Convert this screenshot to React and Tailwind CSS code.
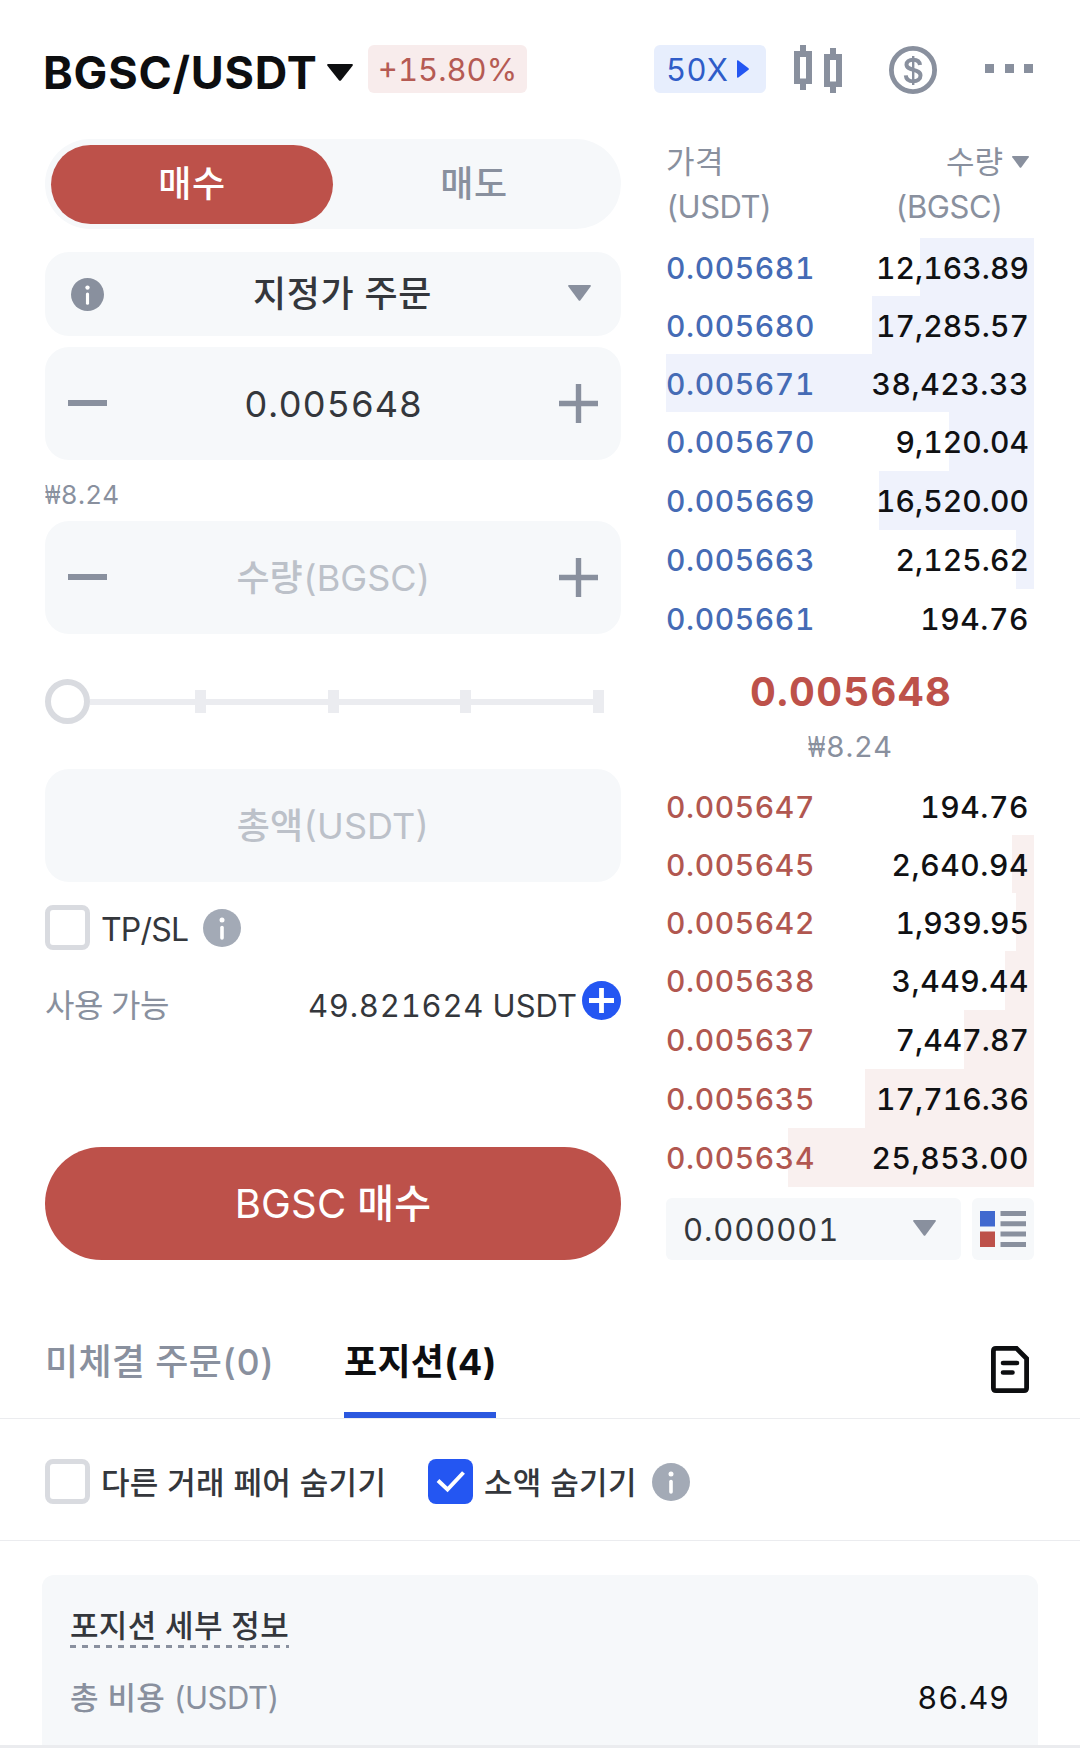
import React from 'react';
import clsx from 'clsx';

const asks = [
  { price: '0.005681', amount: '12,163.89', depth: 114 },
  { price: '0.005680', amount: '17,285.57', depth: 162 },
  { price: '0.005671', amount: '38,423.33', depth: 368 },
  { price: '0.005670', amount: '9,120.04', depth: 85 },
  { price: '0.005669', amount: '16,520.00', depth: 155 },
  { price: '0.005663', amount: '2,125.62', depth: 18 },
  { price: '0.005661', amount: '194.76', depth: 0 },
];

const bids = [
  { price: '0.005647', amount: '194.76', depth: 0 },
  { price: '0.005645', amount: '2,640.94', depth: 22 },
  { price: '0.005642', amount: '1,939.95', depth: 18 },
  { price: '0.005638', amount: '3,449.44', depth: 29 },
  { price: '0.005637', amount: '7,447.87', depth: 70 },
  { price: '0.005635', amount: '17,716.36', depth: 169 },
  { price: '0.005634', amount: '25,853.00', depth: 246 },
];

const TriangleDown = ({ className }) => (
  <svg viewBox="0 0 24 16" preserveAspectRatio="none" className={className} fill="currentColor">
    <path d="M1 0h22q1.4 .3.6 1.6L13 15.2q-1 1.2-2 0L.4 1.6Q-.4.3 1 0Z" />
  </svg>
);

const InfoIcon = ({ className }) => (
  <svg viewBox="0 0 38 38" className={className}>
    <circle cx="19" cy="19" r="19" fill="currentColor" />
    <circle cx="19" cy="11" r="2.5" fill="#fff" />
    <path d="M19 18.5v10.5" stroke="#fff" strokeWidth="3.6" strokeLinecap="round" />
  </svg>
);

const Checkbox = ({ checked }) =>
  checked ? (
    <span className="flex size-[45px] shrink-0 items-center justify-center rounded-lg bg-[#2456f2]">
      <svg viewBox="0 0 45 45" className="size-[45px]" fill="none">
        <path d="M10 21.5l9.5 9L35.5 13.5" stroke="#fff" strokeWidth="4" />
      </svg>
    </span>
  ) : (
    <span className="size-[45px] shrink-0 rounded-lg border-[5px] border-[#d9dbe0]" />
  );

const Won = () => <span className="-mr-[0.36em] inline-block origin-left scale-x-[0.62]">₩</span>;

const Minus = () => <span className="mb-px h-[6px] w-[39px] bg-[#89909e]" />;

const Plus = () => (
  <svg viewBox="0 0 39 39" className="size-[39px]" stroke="#89909e">
    <path d="M0 19.5h39" strokeWidth="5.4" />
    <path d="M19.5 0v39" strokeWidth="5.4" />
  </svg>
);

const Stepper = ({ children }) => (
  <div className="flex h-[113px] items-center justify-between rounded-[24px] bg-[#f6f8fa] px-[23px]">
    <Minus />
    {children}
    <Plus />
  </div>
);

const BookRow = ({ row, index, side }) => (
  <div
    className={clsx(
      'relative flex w-full items-center justify-between text-[30px] leading-none font-medium tracking-[0.6px]',
      index < 3 ? 'h-[58px] pt-[2px]' : 'h-[59px]'
    )}
  >
    <div
      className={clsx('absolute inset-y-0 right-0', side === 'ask' ? 'bg-[#eff2fc]' : 'bg-[#f9f0ef]')}
      style={{ width: row.depth }}
    />
    <span className={clsx('relative', side === 'ask' ? 'text-[#456bb5]' : 'text-[#b15750]')}>{row.price}</span>
    {/* 1 and 7 leave wide gaps next to the comma, so those amounts are set a bit tighter */}
    <span className={clsx('relative pr-[5px] text-[#101113]', /7,|,1|^1/.test(row.amount) && row.amount.includes(',') && 'tracking-[0.1px]')}>
      {row.amount}
    </span>
  </div>
);

const Header = () => (
  <header className="flex h-[139px] items-start pr-[47px] pl-[43px]">
    <h1 className="mt-[50px] w-[284px] text-[45px] leading-none font-bold tracking-[0.8px] whitespace-nowrap text-[#0d0e10]">
      BGSC/USDT
    </h1>
    <TriangleDown className="mt-[64px] h-[17px] w-[26px] text-[#0d0e10]" />
    <div className="mt-[45px] ml-[15px] flex h-[48px] w-[159px] items-center justify-center rounded-md bg-[#f8ecec] text-[31px] leading-none text-[#b55a53]">
      +15.80%
    </div>
    <div className="mt-[45px] ml-[127px] flex h-[48px] w-[112px] items-center rounded-md bg-[#e7eefd] pl-[12px] text-[31px] leading-none text-[#2f5cc8]">
      <span className="w-[71px] tracking-[0.3px]">50X</span>
      <svg viewBox="0 0 12 18" className="h-[18px] w-[12px]" fill="#2456f2">
        <path d="M0 1Q0 0 1 .3L11.5 8.2q.8.8 0 1.6L1 17.8Q0 18 0 17Z" />
      </svg>
    </div>
    <svg viewBox="0 0 48 48" className="mt-[45px] ml-[28px] size-[48px]">
      <path fill="#89909e" d="M6 0h6v6h6v33h-6v6H6v-6H0V6h6ZM36 3h6v6h6v33h-6v6h-6v-6h-6V9h6Z" />
      <path fill="#fff" d="M6 12h6v21.500H6ZM36 15h6v21.500h-6Z" />
    </svg>
    <svg viewBox="0 0 48 48" className="mt-[46px] ml-[47px] size-[48px]" fill="none" stroke="#89909e">
      <circle cx="24" cy="24" r="21.6" strokeWidth="4.8" />
      <path
        d="M31 19C30.600 15.600 28 13.700 24.200 13.700c-4.200 0-6.700 2-6.700 4.900 0 6.600 14 4 14 10.900 0 3.600-3 5.800-7.200 5.800-4.400 0-7.200-2.200-7.500-6"
        strokeWidth="4"
      />
      <path d="M24.200 10v29" strokeWidth="2.400" />
    </svg>
    <div className="mt-[64px] ml-[48px] flex w-[48px] justify-between">
      <span className="size-[9px] bg-[#89909e]" />
      <span className="size-[9px] bg-[#89909e]" />
      <span className="size-[9px] bg-[#89909e]" />
    </div>
  </header>
);

const OrderForm = () => (
  <section className="w-[576px]">
    <div className="flex h-[90px] items-center rounded-full bg-[#f6f8fa] px-[6px] text-[36px] leading-none font-medium tracking-[0.6px]">
      <div className="flex h-[79px] w-[282px] items-center justify-center rounded-full bg-[#bd514a] text-white">매수</div>
      <div className="flex h-[79px] flex-1 items-center justify-center text-[#89909e]">매도</div>
    </div>

    <div className="mt-[23px] flex h-[84px] items-center justify-between rounded-[24px] bg-[#f6f8fa] pr-[30px] pl-[26px]">
      <InfoIcon className="size-[33px] text-[#89909e]" />
      <span className="pl-[13px] text-[36px] leading-none font-medium tracking-[0.6px] text-[#34373c]">지정가 주문</span>
      <TriangleDown className="mb-[3px] h-[16px] w-[23px] text-[#89909e]" />
    </div>

    <div className="mt-[11px]">
      <Stepper>
        <span className="pl-px text-[36px] leading-none tracking-[0.7px] text-[#34373c]">0.005648</span>
      </Stepper>
    </div>
    <div className="flex h-[61px] items-center pt-[8px] text-[26px] leading-none tracking-[0.3px] text-[#89909e]">
      <Won />
      8.24
    </div>
    <Stepper>
      <span className="pl-px text-[36px] leading-none text-[#bcc1c9]">
        <span className="font-medium">수량</span>(BGSC)
      </span>
    </Stepper>

    {/* 수량 비율 슬라이더 */}
    <div className="mt-[45px] flex h-[45px] items-center">
      <span className="size-[45px] shrink-0 rounded-full border-[6px] border-[#d9dbe0] bg-white" />
      {[0, 1, 2, 3].map((step) => (
        <React.Fragment key={step}>
          <span className={clsx('h-[6px] bg-[#ebecf0]', step === 0 ? 'w-[105px]' : 'w-[121.500px]')} />
          <span className="h-[23px] w-[11px] bg-[#ebecf0]" />
        </React.Fragment>
      ))}
    </div>

    <div className="mt-[45px] flex h-[113px] items-center justify-center rounded-[24px] bg-[#f6f8fa] text-[36px] leading-none text-[#bcc1c9]">
      <span className="font-medium">총액</span>(USDT)
    </div>

    <div className="mt-[23px] flex h-[45px] items-center">
      <Checkbox />
      <span className="ml-[11px] pt-[4px] text-[32px] leading-none tracking-[-0.8px] text-[#34373c]">TP/SL</span>
      <InfoIcon className="ml-[15px] size-[38px] text-[#a3aab6]" />
    </div>

    <div className="mt-[31px] flex h-[39px] items-center leading-none">
      <span className="pt-[11px] text-[32px] tracking-[-0.5px] text-[#89909e]">사용 가능</span>
      <span className="ml-auto pt-[9px] text-[31px] text-[#34373c]">
        <span className="tracking-[0.8px]">49.821624</span> USDT
      </span>
      <svg viewBox="0 0 39 39" className="ml-[5px] size-[39px]">
        <circle cx="19.5" cy="19.5" r="19.5" fill="#2456f2" />
        <path d="M7 19.500h25M19.500 7v25" stroke="#fff" strokeWidth="4.800" />
      </svg>
    </div>

    <div className="mt-[127px] flex h-[113px] items-center justify-center rounded-full bg-[#bd514a] text-[40px] leading-none tracking-[0.2px] text-white">
      BGSC&nbsp;<span className="font-medium">매수</span>
    </div>
  </section>
);

const OrderBook = () => (
  <section className="w-[368px]">
    <div className="flex h-[99px] justify-between text-[31px] leading-[45px] text-[#89909e]">
      <div>
        <p className="tracking-[0.4px]">가격</p>
        <p className="tracking-[-0.5px]">(USDT)</p>
      </div>
      <div className="text-right">
        <p className="flex items-center justify-end gap-[9px] pr-[5px]">
          수량
          <TriangleDown className="h-[12px] w-[17px]" />
        </p>
        <p className="pr-[31px] tracking-[-0.4px]">(BGSC)</p>
      </div>
    </div>

    {asks.map((row, i) => (
      <BookRow key={row.price} row={row} index={i} side="ask" />
    ))}

    <div className="flex h-[129px] flex-col items-center text-center">
      <p className="mt-[24px] pl-[2px] text-[40px] leading-none font-bold tracking-[1.3px] text-[#bd514a]">0.005648</p>
      <p className="mt-[20px] pl-px text-[29px] leading-none tracking-[0.6px] text-[#89909e]">
        <Won />
        8.24
      </p>
    </div>

    {bids.map((row, i) => (
      <BookRow key={row.price} row={row} index={i} side="bid" />
    ))}

    <div className="mt-[11px] flex h-[62px] gap-[11px]">
      <div className="flex w-[295px] items-center justify-between rounded-md bg-[#f6f8fa] pr-[25px] pl-[17px] text-[31px] leading-none tracking-[0.9px] text-[#34373c]">
        0.000001
        <TriangleDown className="mb-[2px] h-[16px] w-[23px] text-[#89909e]" />
      </div>
      <div className="flex w-[62px] items-center justify-center rounded-md bg-[#f6f8fa]">
        <svg viewBox="0 0 46 36" className="h-[36px] w-[46px]">
          <path fill="#4169cf" d="M0 0h15v15.500H0Z" />
          <path fill="#bd514a" d="M0 20.500h15V36H0Z" />
          <path fill="#89909e" d="M20.500 0H46v5H20.500ZM20.500 10.300H46v5H20.500ZM20.500 20.600H46v5H20.500ZM20.500 31H46v5H20.500Z" />
        </svg>
      </div>
    </div>
  </section>
);

const Positions = () => (
  <section className="mt-[58px]">
    <div className="flex h-[101px] items-start border-b border-[#ebecef] pr-[51px] pl-[45px] text-[36px] leading-none">
      <div className="mt-[26px] w-[299px] font-medium tracking-[0.3px] whitespace-nowrap text-[#89909e]">미체결 주문(0)</div>
      <div className="h-[100px] w-[152px] border-b-[6px] border-[#2b58df] pt-[26px] font-bold tracking-[0.3px] whitespace-nowrap text-[#0d0e10]">
        포지션(4)
      </div>
      <svg viewBox="0 0 38 47" className="mt-[28px] ml-auto h-[47px] w-[38px]" fill="none" stroke="#0d0e10">
        <path d="M5 2.400h20.500L35.600 12.500V42q0 2.600-2.600 2.600H5q-2.600 0-2.600-2.600V5Q2.400 2.400 5 2.400Z" strokeWidth="4.800" />
        <path d="M12 17h14M12 26.500h9.500" strokeWidth="4.600" strokeLinecap="round" />
      </svg>
    </div>

    <div className="flex h-[122px] items-center border-b border-[#ebecef] px-[45px] pt-[4px] text-[31px] leading-none font-medium tracking-[0.3px] text-[#34373c]">
      <Checkbox />
      <span className="ml-[11px] w-[327px] pt-[2px] whitespace-nowrap">다른 거래 페어 숨기기</span>
      <Checkbox checked />
      <span className="ml-[11px] pt-[2px] whitespace-nowrap">소액 숨기기</span>
      <InfoIcon className="ml-[15px] size-[38px] text-[#a3aab6]" />
    </div>

    <div className="mx-[42px] mt-[34px] h-[170px] rounded-t-xl bg-[#f6f8fa] px-[28px] pt-[35px] text-[31px] leading-none">
      <div className="font-medium tracking-[0.3px] text-[#34373c]">
        <p>포지션 세부 정보</p>
        <svg className="mt-[4px] block h-[3px] w-[219px]">
          <line x1="0" y1="1.500" x2="100%" y2="1.500" stroke="#89909e" strokeWidth="3" strokeDasharray="6 6" />
        </svg>
      </div>
      <div className="mt-[34px] flex justify-between">
        <span className="text-[#89909e]">
          <span className="font-medium tracking-[0.3px]">총 비용</span> <span className="tracking-[-0.5px]">(USDT)</span>
        </span>
        <span className="tracking-[0.8px] text-[#101113]">86.49</span>
      </div>
    </div>
    <div className="h-[3px] bg-[#ebecef]" />
  </section>
);

export default function App() {
  return (
    <div className="h-[1749px] w-[1080px] overflow-hidden bg-white font-['Inter','Noto_Sans_CJK_KR',sans-serif] tabular-nums">
      <Header />
      <main className="flex justify-between pr-[46px] pl-[45px]">
        <OrderForm />
        <OrderBook />
      </main>
      <Positions />
    </div>
  );
}
